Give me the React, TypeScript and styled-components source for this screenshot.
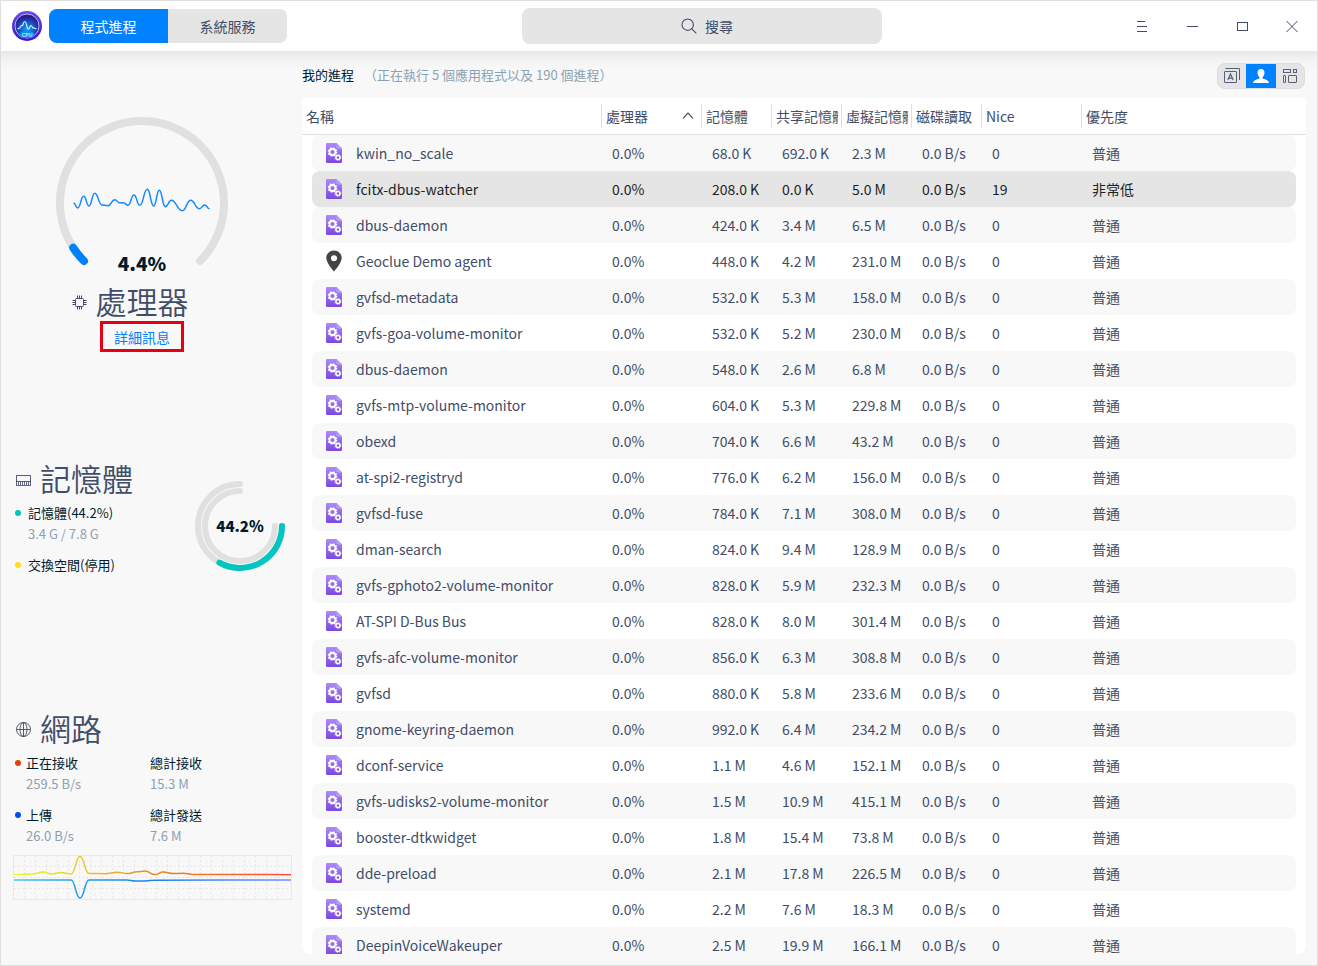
import React from "react";
import styled, { createGlobalStyle } from "styled-components";

const GlobalStyle = createGlobalStyle`
  * { box-sizing: border-box; }
  body { margin: 0; background: #f8f8f8; }
  body, button, input {
    font-family: "Noto Sans CJK TC", "Noto Sans", sans-serif;
    font-size: 14px;
    line-height: 20px;
    color: #414d68;
  }
  button { border: 0; padding: 0; background: none; cursor: pointer; }
  svg { display: block; }
`;

const Window = styled.div`
  display: flex;
  flex-direction: column;
  height: 100vh;
  border: 1px solid #dfdfdf;
  background: #f8f8f8;
  overflow: hidden;
`;

const TitleBar = styled.header`
  flex: none;
  display: flex;
  align-items: center;
  justify-content: space-between;
  height: 50px;
  padding-left: 11px;
  background: #fff;
`;

const Brand = styled.div`
  display: flex;
  align-items: center;
  gap: 7px;
`;

const Tabs = styled.nav`
  display: flex;
  height: 34px;
  border-radius: 8px;
  overflow: hidden;
  background: #e5e5e5;
`;

const Tab = styled.button<{ $active?: boolean }>`
  width: 119px;
  background: ${(p) => (p.$active ? "#0081ff" : "#e5e5e5")};
  color: ${(p) => (p.$active ? "#fff" : "#414d68")};
`;

const SearchBox = styled.label`
  display: flex;
  align-items: center;
  justify-content: center;
  gap: 8px;
  width: 360px;
  height: 36px;
  padding-left: 12px;
  border-radius: 8px;
  background: #e5e5e5;
`;

const SearchInput = styled.input`
  width: 30px;
  padding: 0;
  border: 0;
  outline: 0;
  background: none;
  &::placeholder { color: #414d68; opacity: 1; }
`;

const Controls = styled.div`
  display: flex;
`;

const ControlButton = styled.button`
  display: grid;
  place-items: center;
  width: 50px;
  height: 50px;
`;

const Body = styled.div`
  flex: 1;
  min-height: 0;
  display: flex;
  background: linear-gradient(#e7e7e7, #f2f2f2 8px, #f8f8f8 18px);
`;

const Sidebar = styled.aside`
  flex: none;
  width: 301px;
  padding: 66px 10px 0 12px;
`;

const CpuSection = styled.section`
  display: flex;
  flex-direction: column;
  align-items: center;
  width: 258px;
`;

const GaugeStack = styled.div`
  display: grid;
  justify-items: center;
  > * { grid-area: 1 / 1; }
`;

const Percent = styled.strong<{ $size: number; $end?: boolean }>`
  align-self: ${(p) => (p.$end ? "end" : "center")};
  font-size: ${(p) => p.$size}px;
  line-height: 28px;
  font-weight: 900;
  color: #001a2e;
`;

const Heading = styled.h2`
  display: flex;
  align-items: center;
  gap: 8px;
  margin: 0 0 4px;
  font-size: 31px;
  line-height: 40px;
  font-weight: 350;
  color: #414d68;
  > svg { margin-top: 3px; }
`;

const CpuHeading = styled(Heading)`
  margin: 4px 0 0;
  padding-right: 24px;
`;

const NetHeading = styled(Heading)`
  padding-left: 3px;
`;

const DetailLink = styled.a`
  padding: 3px 11px 2px;
  border: 3px solid #e60012;
  color: #0081ff;
  text-decoration: none;
`;

const MemorySection = styled.section`
  display: flex;
  justify-content: space-between;
  margin-top: 106px;
  padding: 0 7px 0 3px;
`;

const MemoryGauge = styled(GaugeStack)`
  margin-top: 23px;
  align-self: flex-start;
`;

const NetworkSection = styled.section`
  margin-top: 133px;
`;

const StatGrid = styled.dl`
  display: grid;
  grid-template-columns: 124px 1fr;
  row-gap: 10px;
  margin: 0 0 9px 13px;
`;

const StatList = styled.dl`
  display: grid;
  row-gap: 10px;
  margin: 0 0 0 12px;
`;

const Label = styled.dt<{ $dot?: string; $wide?: boolean }>`
  position: relative;
  font-size: 13px;
  line-height: 21px;
  color: #001a2e;
  &::before {
    content: "";
    display: ${(p) => (p.$dot ? "block" : "none")};
    position: absolute;
    left: ${(p) => (p.$wide ? -13 : -11)}px;
    top: 8px;
    width: 6px;
    height: 6px;
    border-radius: 50%;
    background: ${(p) => p.$dot};
  }
`;

const Value = styled.dd`
  margin: 0;
  font-size: 13px;
  line-height: 21px;
  color: #8aa1b4;
`;

const Main = styled.main`
  flex: 1;
  min-width: 0;
  display: flex;
  flex-direction: column;
  padding: 0 11px 11px 0;
`;

const Toolbar = styled.div`
  flex: none;
  display: flex;
  align-items: center;
  justify-content: space-between;
  height: 47px;
  padding-right: 1px;
  font-size: 13px;
`;

const Summary = styled.p`
  display: flex;
  gap: 10px;
  margin: 0;
  color: #8aa1b4;
`;

const SummaryTitle = styled.span`
  color: #001a2e;
`;

const ViewSwitch = styled.div`
  display: flex;
  height: 26px;
  margin-top: 2px;
  border-radius: 8px;
  border: 1px solid #dcdcdc;
  overflow: hidden;
  background: #e5e5e5;
`;

const ViewButton = styled.button<{ $active?: boolean }>`
  display: grid;
  place-items: center;
  width: ${(p) => (p.$active ? 30 : 28)}px;
  background: ${(p) => (p.$active ? "#0081ff" : "none")};
`;

const Panel = styled.div`
  flex: 1;
  min-height: 0;
  overflow: auto;
  scrollbar-width: none;
  background: #fff;
  border-radius: 0 0 8px 8px;
`;

const Table = styled.table`
  width: 100%;
  table-layout: fixed;
  border-collapse: separate;
  border-spacing: 0;
`;

const HeadCell = styled.th<{ $width?: number }>`
  position: sticky;
  top: 0;
  width: ${(p) => (p.$width ? p.$width + "px" : "auto")};
  height: 37px;
  padding: 0;
  border-bottom: 1px solid #e0e0e0;
  background: #fff;
  font-weight: 400;
`;

const HeadButton = styled.button<{ $divider: boolean }>`
  display: flex;
  align-items: center;
  justify-content: space-between;
  width: 100%;
  height: 24px;
  padding: 0 3px 0 4px;
  border-left: ${(p) => (p.$divider ? "1px solid #e0e0e0" : "0")};
  white-space: nowrap;
  overflow: hidden;
`;

const HeadText = styled.span`
  overflow: hidden;
`;

const SortMark = styled.span`
  padding-right: 4px;
`;

const Row = styled.tr<{ $selected?: boolean }>`
  color: ${(p) => (p.$selected ? "#1f1f1f" : "#414d68")};
  > td { background-color: ${(p) => (p.$selected ? "#e5e5e5" : "#fff")}; }
  &:nth-child(odd) > td { background-color: #f8f8f8; }
`;

/* The outer cells carry a transparent edge so the row pill is inset from the panel. */
const Cell = styled.td`
  height: 36px;
  padding: 0 0 0 11px;
  white-space: nowrap;
  background-clip: padding-box;
  &:first-child {
    padding-left: 12px;
    border-left: 10px solid transparent;
    border-radius: 18px 0 0 18px / 8px 0 0 8px;
  }
  &:last-child {
    border-right: 10px solid transparent;
    border-radius: 0 18px 18px 0 / 0 8px 8px 0;
  }
`;

const NameBox = styled.div`
  display: flex;
  align-items: center;
  gap: 12px;
`;

type Point = [number, number];

/* Joins the points with curves that are level at every point. */
const smooth = (pts: Point[]) =>
  pts.reduce((d, [x, y], i) => {
    if (i === 0) return `M${x} ${y}`;
    const [px, py] = pts[i - 1];
    const mid = (px + x) / 2;
    return `${d}C${mid} ${py} ${mid} ${y} ${x} ${y}`;
  }, "");

const cpuWave: Point[] = [
  [17.5, 86], [21.7, 91], [27.7, 79.3], [33, 89], [38.7, 76.3], [46, 88], [52, 88.7], [58.7, 82.7],
  [64, 86], [67.5, 85.7], [72, 88.3], [78, 78], [83.7, 88.3], [91.3, 72.3], [97.7, 89], [103.3, 73.3],
  [109.3, 89.7], [115.3, 83.3], [126.3, 93.7], [134.7, 83.3], [143.3, 91.7], [148.7, 88], [153.5, 91.7],
];

const receiveLine: Point[] = [
  [1, 19.5], [20, 19], [30, 17], [39, 19], [48, 17.5], [58, 19], [67, 1.5], [76, 18.5], [92, 18.7],
  [104, 17.2], [114, 18.6], [124, 16.8], [132, 16], [142, 19.6], [150, 17], [160, 18.6], [170, 18.3],
  [180, 19.4], [240, 19.5], [278, 19.7],
];

const sendLine: Point[] = [
  [1, 25], [58, 25], [67, 43], [76, 25], [114, 25], [122, 26], [132, 26], [142, 25.2], [278, 25],
];

const AppLogo = () => (
  <svg width="30" height="30" viewBox="0 0 30 30" aria-hidden="true">
    <defs>
      <radialGradient id="logoFill" cx="50%" cy="65%" r="55%">
        <stop offset="0" stopColor="#0aa5f5" />
        <stop offset="0.6" stopColor="#1b4fc4" />
        <stop offset="1" stopColor="#2a1c8c" />
      </radialGradient>
      <linearGradient id="logoRim" x1="0" y1="0" x2="0" y2="1">
        <stop offset="0" stopColor="#6a4cf0" />
        <stop offset="1" stopColor="#3c12c8" />
      </linearGradient>
    </defs>
    <circle cx="15" cy="15" r="15" fill="url(#logoRim)" />
    <circle cx="15" cy="15" r="12" fill="url(#logoFill)" stroke="#b9b4f5" strokeWidth="1" />
    <path d="M6 17.5C8.5 18.500 8.500 14 10 14.500C11.500 15 11 10.500 12.700 10.500C14.800 10.500 14.500 18 16.500 18C18 18 17.600 14.500 19 14.500C20.500 14.500 20 17.500 21.500 17C22.500 16.600 23 18 24 17.600" fill="none" stroke="#c9f4ff" strokeWidth="1.200" strokeLinecap="round" />
    <rect x="8" y="20.500" width="14" height="6.500" rx="3" fill="#118df0" />
    <text x="15" y="25.500" textAnchor="middle" fontFamily="Liberation Sans, sans-serif" fontSize="5" fontWeight="700" fill="#a8ecff">CPU</text>
  </svg>
);

const CpuGauge = () => (
  <svg width="172" height="160" viewBox="0 0 172 160" aria-hidden="true">
    <path d="M28 144A82 82 0 1 1 144 144" fill="none" stroke="#e0e0e0" strokeWidth="8" strokeLinecap="round" />
    <path d="M28 144A82 82 0 0 1 17.200 130.700" fill="none" stroke="#0081ff" strokeWidth="8" strokeLinecap="round" />
    <path d={smooth(cpuWave)} fill="none" stroke="#1088ff" strokeWidth="1.500" />
  </svg>
);

const MemoryRings = () => (
  <svg width="90" height="90" viewBox="0 0 90 90" fill="none" strokeWidth="6" strokeLinecap="round" aria-hidden="true">
    <path d="M45 3A42 42 0 1 0 87 45" stroke="#e0e0e0" />
    <path d="M45 10A35 35 0 1 0 80 45" stroke="#e0e0e0" />
    <path d="M87 45A42 42 0 0 1 24.400 81.600" stroke="#00c5c0" />
  </svg>
);

const NetworkChart = () => (
  <svg width="279" height="45" viewBox="0 0 279 45" role="img" aria-label="網路">
    <defs>
      <linearGradient id="rx" gradientUnits="userSpaceOnUse" x1="0" y1="0" x2="279" y2="0">
        <stop offset="0" stopColor="#e6ff2a" />
        <stop offset="0.250" stopColor="#e5cd2b" />
        <stop offset="0.500" stopColor="#e88a1c" />
        <stop offset="1" stopColor="#ff4a3c" />
      </linearGradient>
      <linearGradient id="tx" gradientUnits="userSpaceOnUse" x1="0" y1="0" x2="279" y2="0">
        <stop offset="0" stopColor="#4fc3f0" />
        <stop offset="0.250" stopColor="#1f9be8" />
        <stop offset="0.500" stopColor="#1c86ea" />
        <stop offset="1" stopColor="#7a8cff" />
      </linearGradient>
    </defs>
    <g stroke="#e8e8e8" strokeDasharray="2 2" shapeRendering="crispEdges">
      {Array.from({ length: 24 }, (_, i) => (
        <line key={i} x1={11.5 + i * 11} x2={11.5 + i * 11} y1="1" y2="44" />
      ))}
      {[11.5, 22.5, 33.5].map((y) => (
        <line key={y} x1="1" x2="278" y1={y} y2={y} />
      ))}
    </g>
    <rect x="0.500" y="0.500" width="278" height="44" fill="none" stroke="#e8e8e8" />
    <path d={smooth(receiveLine)} fill="none" stroke="url(#rx)" strokeWidth="1.500" />
    <path d={smooth(sendLine)} fill="none" stroke="url(#tx)" strokeWidth="1.500" />
  </svg>
);

const ChipIcon = () => (
  <svg width="16" height="16" viewBox="0 0 16 16" fill="none" stroke="#414d68" aria-hidden="true">
    <rect x="3.500" y="3.500" width="8" height="8" rx="1" />
    <path d="M5.500 0.500V3M7.500 0.500V3M9.500 0.500V3M5.500 12v2.500M7.500 12v2.500M9.500 12v2.500M0.500 5.500H3M0.500 7.500H3M0.500 9.500H3M12 5.500h2.500M12 7.500h2.500M12 9.500h2.500" />
  </svg>
);

const MemoryIcon = () => (
  <svg width="16" height="16" viewBox="0 0 16 16" fill="none" stroke="#414d68" aria-hidden="true">
    <path d="M0.500 13.500V3.500h14V13.500M0 9.500h15" strokeWidth="0.900" />
    <path d="M2.500 10V13.500M4.500 10V13.500M6.500 10V13.500M8.500 10V13.500M10.500 10V13.500M12.500 10V13.500M0 13.500h15" strokeWidth="0.800" />
  </svg>
);

const GlobeIcon = () => (
  <svg width="16" height="16" viewBox="0 0 16 16" fill="none" stroke="#414d68" strokeWidth="0.900" aria-hidden="true">
    <circle cx="7.500" cy="7.500" r="7" />
    <ellipse cx="7.500" cy="7.500" rx="3.500" ry="7" />
    <path d="M7.500 0.500v14M0.500 7.500h14" />
  </svg>
);

const ServiceIcon = () => (
  <svg width="20" height="22" viewBox="0 0 20 22" aria-hidden="true">
    <defs>
      <linearGradient id="doc" x1="0" y1="0" x2="0" y2="1">
        <stop offset="0" stopColor="#ab8cfa" />
        <stop offset="1" stopColor="#7b47dd" />
      </linearGradient>
    </defs>
    <path d="M3 1h9.500L18 6.500v13a1.500 1.500 0 0 1-1.500 1.500h-13A1.500 1.500 0 0 1 2 19.500v-17.500A1 1 0 0 1 3 1z" fill="url(#doc)" />
    <path d="M12.500 1L18 6.500h-4.500a1 1 0 0 1-1-1z" fill="#b79dfb" />
    <g fill="none" stroke="#fff">
      <circle cx="8.500" cy="10" r="3" strokeWidth="1.800" />
      <circle cx="8.500" cy="10" r="4.200" strokeWidth="1.200" strokeDasharray="1.650 1.650" />
      <circle cx="14" cy="15.500" r="2" strokeWidth="1.400" />
      <circle cx="14" cy="15.500" r="2.900" strokeWidth="0.900" strokeDasharray="1.140 1.140" />
    </g>
  </svg>
);

const PinIcon = () => (
  <svg width="20" height="22" viewBox="0 0 20 22" aria-hidden="true">
    <path fillRule="evenodd" fill="#444" d="M10 0.500C5.600 0.500 2.300 3.800 2.300 8c0 5 7.700 13.500 7.700 13.500S17.700 13 17.700 8C17.700 3.800 14.400 0.500 10 0.500zM10 5.200a3 3 0 1 1 0 6a3 3 0 0 1 0-6z" />
  </svg>
);

const columns = [
  { label: "名稱", width: 299 },
  { label: "處理器", width: 100, sorted: true },
  { label: "記憶體", width: 70 },
  { label: "共享記憶體", width: 70 },
  { label: "虛擬記憶體", width: 70 },
  { label: "磁碟讀取", width: 70 },
  { label: "Nice", width: 100 },
  { label: "優先度" },
];

/* name, memory, shared memory, virtual memory */
const processes = [
  ["kwin_no_scale", "68.0 K", "692.0 K", "2.3 M"],
  ["fcitx-dbus-watcher", "208.0 K", "0.0 K", "5.0 M"],
  ["dbus-daemon", "424.0 K", "3.4 M", "6.5 M"],
  ["Geoclue Demo agent", "448.0 K", "4.2 M", "231.0 M"],
  ["gvfsd-metadata", "532.0 K", "5.3 M", "158.0 M"],
  ["gvfs-goa-volume-monitor", "532.0 K", "5.2 M", "230.0 M"],
  ["dbus-daemon", "548.0 K", "2.6 M", "6.8 M"],
  ["gvfs-mtp-volume-monitor", "604.0 K", "5.3 M", "229.8 M"],
  ["obexd", "704.0 K", "6.6 M", "43.2 M"],
  ["at-spi2-registryd", "776.0 K", "6.2 M", "156.0 M"],
  ["gvfsd-fuse", "784.0 K", "7.1 M", "308.0 M"],
  ["dman-search", "824.0 K", "9.4 M", "128.9 M"],
  ["gvfs-gphoto2-volume-monitor", "828.0 K", "5.9 M", "232.3 M"],
  ["AT-SPI D-Bus Bus", "828.0 K", "8.0 M", "301.4 M"],
  ["gvfs-afc-volume-monitor", "856.0 K", "6.3 M", "308.8 M"],
  ["gvfsd", "880.0 K", "5.8 M", "233.6 M"],
  ["gnome-keyring-daemon", "992.0 K", "6.4 M", "234.2 M"],
  ["dconf-service", "1.1 M", "4.6 M", "152.1 M"],
  ["gvfs-udisks2-volume-monitor", "1.5 M", "10.9 M", "415.1 M"],
  ["booster-dtkwidget", "1.8 M", "15.4 M", "73.8 M"],
  ["dde-preload", "2.1 M", "17.8 M", "226.5 M"],
  ["systemd", "2.2 M", "7.6 M", "18.3 M"],
  ["DeepinVoiceWakeuper", "2.5 M", "19.9 M", "166.1 M"],
];

export default function App() {
  return (
    <Window>
      <GlobalStyle />
      <TitleBar>
        <Brand>
          <AppLogo />
          <Tabs>
            <Tab $active>程式進程</Tab>
            <Tab>系統服務</Tab>
          </Tabs>
        </Brand>
        <SearchBox>
          <svg width="16" height="16" viewBox="0 0 16 16" fill="none" stroke="#414d68" strokeWidth="1.100" aria-hidden="true">
            <circle cx="6.700" cy="6.700" r="5.700" />
            <path d="M10.800 10.800L15.300 15.300" />
          </svg>
          <SearchInput type="text" aria-label="搜尋" placeholder="搜尋" />
        </SearchBox>
        <Controls>
          <ControlButton aria-label="選單">
            <svg width="11" height="11" viewBox="0 0 11 11" stroke="#414d68" shapeRendering="crispEdges">
              <path d="M0 0.500h8M0 5.500h10M0 10.500h10" />
            </svg>
          </ControlButton>
          <ControlButton aria-label="最小化">
            <svg width="12" height="12" viewBox="0 0 12 12" stroke="#414d68" shapeRendering="crispEdges">
              <path d="M1 6.500h11" />
            </svg>
          </ControlButton>
          <ControlButton aria-label="最大化">
            <svg width="12" height="12" viewBox="0 0 12 12" fill="none" stroke="#414d68" shapeRendering="crispEdges">
              <rect x="1.500" y="2.500" width="10" height="8" />
            </svg>
          </ControlButton>
          <ControlButton aria-label="關閉">
            <svg width="12" height="12" viewBox="0 0 12 12" stroke="#414d68">
              <path d="M0.500 1l11 11M11.500 1l-11 11" />
            </svg>
          </ControlButton>
        </Controls>
      </TitleBar>

      <Body>
        <Sidebar>
          <CpuSection>
            <GaugeStack>
              <CpuGauge />
              <Percent $size={19} $end>4.4%</Percent>
            </GaugeStack>
            <CpuHeading>
              <ChipIcon />
              處理器
            </CpuHeading>
            <DetailLink href="#cpu">詳細訊息</DetailLink>
          </CpuSection>

          <MemorySection>
            <div>
              <Heading>
                <MemoryIcon />
                記憶體
              </Heading>
              <StatList>
                <div>
                  <Label $wide $dot="#00c5c0">記憶體(44.2%)</Label>
                  <Value>3.4 G / 7.8 G</Value>
                </div>
                <div>
                  <Label $wide $dot="#fedf19">交換空間(停用)</Label>
                </div>
              </StatList>
            </div>
            <MemoryGauge>
              <MemoryRings />
              <Percent $size={15}>44.2%</Percent>
            </MemoryGauge>
          </MemorySection>

          <NetworkSection>
            <NetHeading>
              <GlobeIcon />
              網路
            </NetHeading>
            <StatGrid>
              <div>
                <Label $dot="#e14300">正在接收</Label>
                <Value>259.5 B/s</Value>
              </div>
              <div>
                <Label>總計接收</Label>
                <Value>15.3 M</Value>
              </div>
              <div>
                <Label $dot="#004ef0">上傳</Label>
                <Value>26.0 B/s</Value>
              </div>
              <div>
                <Label>總計發送</Label>
                <Value>7.6 M</Value>
              </div>
            </StatGrid>
            <NetworkChart />
          </NetworkSection>
        </Sidebar>

        <Main>
          <Toolbar>
            <Summary>
              <SummaryTitle>我的進程</SummaryTitle>
              <span>（正在執行 5 個應用程式以及 190 個進程）</span>
            </Summary>
            <ViewSwitch>
              <ViewButton aria-label="應用程式">
                <svg width="16" height="15" viewBox="0 0 16 15" fill="none" stroke="#566079" aria-hidden="true">
                  <rect x="0.500" y="3.500" width="12" height="11" rx="0.500" />
                  <path d="M1.500 0.500h14V12" />
                  <path d="M3.800 12L6.500 6L9.200 12M4.700 10.200h3.600" strokeWidth="1.200" />
                </svg>
              </ViewButton>
              <ViewButton $active aria-label="我的進程">
                <svg width="16" height="14" viewBox="0 0 16 14" fill="#fff" aria-hidden="true">
                  <path d="M8 0C5.600 0 4.400 1.600 4.500 4c.1 1.900.9 3.200 1.900 4.100v1.200C5.200 10.500 0.500 10.600 0 14h16c-.5-3.400-5.200-3.500-6.400-4.700V8.100c1-.9 1.800-2.200 1.900-4.100C11.600 1.600 10.400 0 8 0z" />
                </svg>
              </ViewButton>
              <ViewButton aria-label="所有進程">
                <svg width="14" height="14" viewBox="0 0 14 14" fill="none" stroke="#566079" aria-hidden="true">
                  <rect x="0.500" y="0.500" width="7" height="3" />
                  <rect x="10.500" y="0.500" width="3" height="3" />
                  <rect x="0.500" y="6.500" width="2" height="7" rx="0.500" />
                  <rect x="5.500" y="6.500" width="8" height="7" rx="0.500" />
                </svg>
              </ViewButton>
            </ViewSwitch>
          </Toolbar>

          <Panel>
            <Table>
              <thead>
                <tr>
                  {columns.map((c, i) => (
                    <HeadCell key={c.label} $width={c.width} aria-sort={c.sorted ? "ascending" : undefined}>
                      <HeadButton $divider={i > 0}>
                        <HeadText>{c.label}</HeadText>
                        {c.sorted && (
                          <SortMark>
                            <svg width="12" height="9" viewBox="0 0 12 9" fill="none" stroke="#414d68" strokeWidth="1.200" aria-hidden="true">
                              <path d="M1 6.300L6 1L11 6.300" />
                            </svg>
                          </SortMark>
                        )}
                      </HeadButton>
                    </HeadCell>
                  ))}
                </tr>
              </thead>
              <tbody>
                {processes.map(([name, memory, shared, virtual], i) => {
                  const selected = name === "fcitx-dbus-watcher";
                  return (
                    <Row key={i} $selected={selected}>
                      <Cell>
                        <NameBox>
                          {name.startsWith("Geoclue") ? <PinIcon /> : <ServiceIcon />}
                          {name}
                        </NameBox>
                      </Cell>
                      <Cell>0.0%</Cell>
                      <Cell>{memory}</Cell>
                      <Cell>{shared}</Cell>
                      <Cell>{virtual}</Cell>
                      <Cell>0.0 B/s</Cell>
                      <Cell>{selected ? "19" : "0"}</Cell>
                      <Cell>{selected ? "非常低" : "普通"}</Cell>
                    </Row>
                  );
                })}
              </tbody>
            </Table>
          </Panel>
        </Main>
      </Body>
    </Window>
  );
}
